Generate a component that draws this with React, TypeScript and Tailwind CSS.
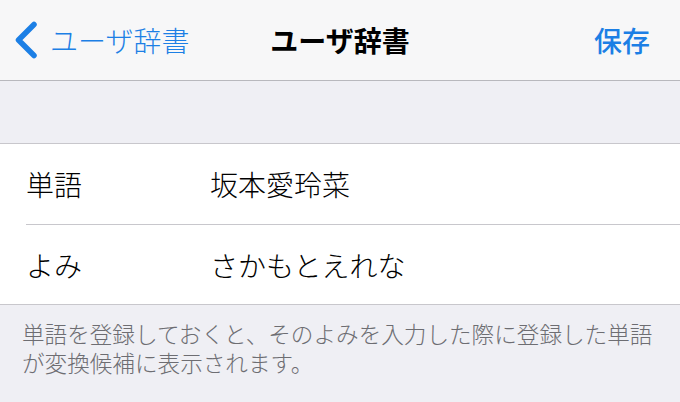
import React from 'react';

const font = { fontFamily: '"Noto Sans CJK JP", "Noto Sans", sans-serif' };

const rows = [
  { label: '単語', value: '坂本愛玲菜' },
  { label: 'よみ', value: 'さかもとえれな' },
];

export default function App() {
  return (
    <div className="w-[680px] h-[402px] bg-[#efeff4] overflow-hidden" style={font}>
      {/* Nav bar */}
      <div className="h-[81px] bg-[#f7f7f8] border-b border-[#b8b8bd] flex items-center relative">
        <div className="flex items-center pl-[13px] text-[#1c7fe5]">
          <svg width="26" height="38" viewBox="0 0 26 38" fill="none">
            <path d="M21 3.5 L5.5 19 L21 34.5" stroke="#1c7fe5" strokeWidth="5.5" strokeLinecap="round" strokeLinejoin="round" />
          </svg>
          <span className="ml-[11px] text-[28px] font-light leading-none">ユーザ辞書</span>
        </div>
        <div className="absolute left-0 right-0 text-center text-[28px] font-bold text-black leading-none pointer-events-none">
          ユーザ辞書
        </div>
        <div className="ml-auto pr-[30px] text-[28px] font-medium text-[#1c7fe5] leading-none">保存</div>
      </div>

      {/* Spacer */}
      <div className="h-[62px]" />

      {/* Rows */}
      <div className="bg-white border-t border-b border-[#c8c7cc]">
        {rows.map((r, i) => (
          <div key={r.label} className={`h-[80px] ml-[26px] flex items-center ${i > 0 ? 'border-t border-[#c8c7cc]' : ''}`}>
            <span className="w-[184px] text-[28px] font-light text-black leading-none">{r.label}</span>
            <span className="text-[28px] font-light text-black leading-none">{r.value}</span>
          </div>
        ))}
      </div>

      {/* Footer */}
      <div className="px-[22px] pt-[14px] text-[22.6px] font-light leading-[29px] text-[#6d6d72]">
        単語を登録しておくと、そのよみを入力した際に登録した単語が変換候補に表示されます。
      </div>
    </div>
  );
}
